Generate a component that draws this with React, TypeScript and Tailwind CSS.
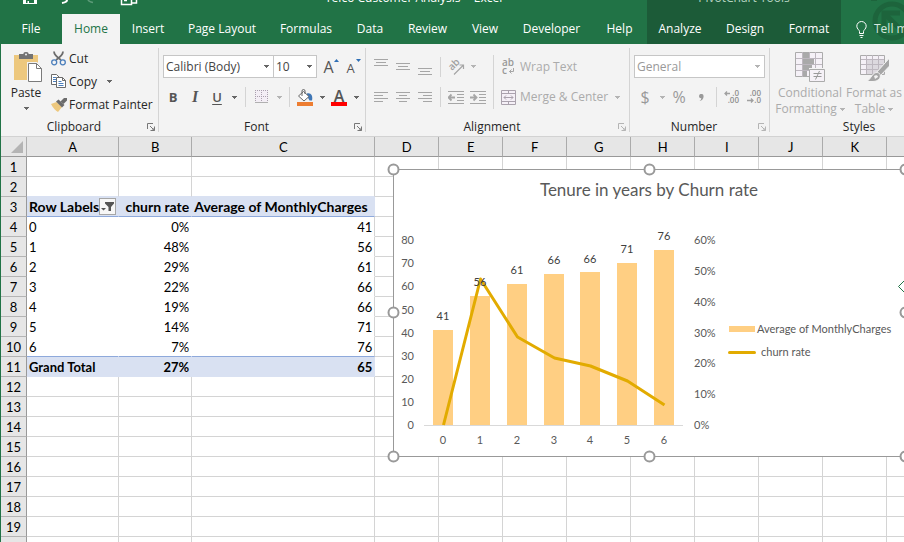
import React from "react";

const UI = "font-['Open_Sans','Noto_Sans',sans-serif]";
const SHEET = "font-['Lato','Open_Sans',sans-serif]";

/* ---------- small shared pieces ---------- */

function Caret({ className = "fill-[#666]" }: { className?: string }) {
  return (
    <svg width="5" height="3" viewBox="0 0 5 3" className={`shrink-0 ${className}`} aria-hidden="true" shapeRendering="crispEdges">
      <path d="M0 0h5v1H4v1H3v1H2V2H1V1H0z" />
    </svg>
  );
}

function Drop({ label, dim = false }: { label: string; dim?: boolean }) {
  return (
    <button type="button" aria-label={label} className="flex h-[22px] w-3 shrink-0 items-center justify-center">
      <Caret className={dim ? "fill-[#b4b4b4]" : "fill-[#666]"} />
    </button>
  );
}

function Tool({ label, children }: { label: string; children: React.ReactNode }) {
  return (
    <button type="button" aria-label={label} className="flex h-[22px] w-[22px] shrink-0 items-center justify-center">
      {children}
    </button>
  );
}

function Divider({ className = "mx-1 h-5" }: { className?: string }) {
  return <div className={`w-px shrink-0 bg-[#d4d4d4] ${className}`} />;
}

function Launcher({ dim }: { dim?: boolean }) {
  return (
    <svg width="8" height="8" viewBox="0 0 8 8" className={dim ? "stroke-[#b4b4b4]" : "stroke-[#777]"} fill="none" aria-hidden="true">
      <path d="M.5 6V.5H6M3 3l3.500 3.500M7.500 3.500v4h-4" />
      <path d="M5 7h2.500M7 5v2.500" />
    </svg>
  );
}

function Group({
  name,
  width,
  launcher,
  children,
}: {
  name: string;
  width: string;
  launcher?: "on" | "dim";
  children: React.ReactNode;
}) {
  return (
    <section aria-label={name} className={`relative flex shrink-0 flex-col ${width}`}>
      <div className="flex-1">{children}</div>
      <div className="flex h-[18px] items-center">
        <span className="flex-1 text-center leading-4 text-[#262626]">{name}</span>
        {launcher && (
          <button type="button" aria-label={`${name} settings`} className="mr-1 flex w-2 items-center">
            <Launcher dim={launcher === "dim"} />
          </button>
        )}
      </div>
      <div className="absolute right-0 top-1 h-[84px] w-px bg-[#d4d4d4]" />
    </section>
  );
}

function Combo({
  label,
  value,
  width,
  dim = false,
}: {
  label: string;
  value: string;
  width: string;
  dim?: boolean;
}) {
  return (
    <div className={`relative shrink-0 ${width}`}>
      <select
        aria-label={label}
        defaultValue={value}
        className={`h-[23px] w-full appearance-none border border-[#c6c6c6] bg-white pl-[2px] text-xs leading-4 outline-none ${
          dim ? "text-[#999]" : "text-[#444]"
        }`}
      >
        <option>{value}</option>
      </select>
      <span className="pointer-events-none absolute right-[5px] top-[10px]">
        <Caret className={dim ? "fill-[#b4b4b4]" : "fill-[#666]"} />
      </span>
    </div>
  );
}

/* ---------- title and tabs ---------- */

const TABS = [
  { name: "File", width: "w-[62px]" },
  { name: "Home", width: "w-[58px]" },
  { name: "Insert", width: "w-[56px]" },
  { name: "Page Layout", width: "w-[92px]" },
  { name: "Formulas", width: "w-[76px]" },
  { name: "Data", width: "w-[52px]" },
  { name: "Review", width: "w-[63px]" },
  { name: "View", width: "w-[52px]" },
  { name: "Developer", width: "w-[81px]" },
  { name: "Help", width: "w-[55px]" },
];

const CHART_TABS = [
  { name: "Analyze", width: "w-[66px]" },
  { name: "Design", width: "w-[64px]" },
  { name: "Format", width: "w-[64px]" },
];

function Tab({ name, width, active = false }: { name: string; width: string; active?: boolean }) {
  return (
    <button
      type="button"
      className={`h-[30px] shrink-0 whitespace-nowrap text-center text-xs leading-4 ${width} ${
        active ? "bg-[#f3f3f3] text-[#217346]" : "text-white"
      }`}
    >
      {name}
    </button>
  );
}

function Header() {
  return (
    <header className="flex h-11 shrink-0 overflow-hidden bg-[#217346]">
      <div className="flex shrink-0 flex-col">
        <div className="flex h-3.5 items-start overflow-hidden text-white">
          <svg width="150" height="8" viewBox="0 0 150 8" className="shrink-0" aria-hidden="true">
            <path d="M23 0h14v4H23z" fill="#fff" />
            <path d="M26 0h8v3h-5v-2h-1.500v2H26z" fill="#217346" />
            <path d="M67 0c0 1.500-2 2.500-5 3" stroke="#fff" strokeWidth="2" fill="none" />
            <path d="M88 0c.5 1 2 2 5 2.500" stroke="#5d9a78" strokeWidth="1.500" fill="none" />
            <path d="M121.500 0v4.500h10V0M136.500 0v3h-3M124 .5h3M131 3h4" stroke="#fff" strokeWidth="1.500" fill="none" />
          </svg>
          <h1 className="-mt-[10px] ml-[175px] whitespace-pre text-xs leading-4">Telco Customer Analysis -  Excel</h1>
        </div>
        <nav aria-label="Ribbon tabs" className="flex">
          {TABS.map((t) => (
            <Tab key={t.name} {...t} active={t.name === "Home"} />
          ))}
        </nav>
      </div>
      <div className="flex shrink-0 flex-col bg-[#1c5b38]">
        <div className="flex h-3.5 justify-center overflow-hidden">
          <span className="-mt-[10px] text-xs leading-4 text-[#b5d3c1]">PivotChart Tools</span>
        </div>
        <nav aria-label="PivotChart tabs" className="flex">
          {CHART_TABS.map((t) => (
            <Tab key={t.name} {...t} />
          ))}
        </nav>
      </div>
      <div className="relative flex min-w-0 flex-1 items-end overflow-hidden">
        <svg width="63" height="44" viewBox="0 0 63 44" className="absolute left-0 top-0" fill="none" aria-hidden="true">
          <circle cx="51" cy="21" r="17" stroke="#1d643c" strokeWidth="5" />
          <path d="M43 27V13h16M45 15l16 16" stroke="#1d643c" strokeWidth="5" />
          <path d="M30 0h6" stroke="#1d643c" strokeWidth="2" />
        </svg>
        <button type="button" className="relative flex h-[30px] items-center gap-[7px] whitespace-nowrap pl-[15px] text-xs leading-4 text-[#d5e6dc]">
          <svg width="11" height="17" viewBox="0 0 11 17" fill="none" stroke="#fff" aria-hidden="true">
            <path d="M3.500 12.500v-2C3.500 9 .8 8 .8 5.200a4.700 4.700 0 0 1 9.400 0C10.200 8 7.500 9 7.500 10.500v2zM3.500 14.500h4M4.500 16.500h2" />
          </svg>
          Tell me
        </button>
      </div>
    </header>
  );
}

/* ---------- ribbon icons ---------- */

function PasteIcon() {
  return (
    <svg width="28" height="30" viewBox="0 0 28 30" aria-hidden="true">
      <path d="M0 3h24v25H0z" fill="#edc87e" />
      <path d="M5 2h4.500V1Q10 0 12 0t2.500 1v1H19v5H5z" fill="#737373" />
      <circle cx="12" cy="2.500" r="1" fill="#f3f3f3" />
      <path d="M13 10h10l5 5v15H13z" fill="#f3f3f3" />
      <path d="M14.500 11.500h8l5 5v13h-13z" fill="#fff" stroke="#7a7a7a" />
      <path d="M22.500 11.500v5h5" fill="none" stroke="#7a7a7a" />
    </svg>
  );
}

function CutIcon() {
  return (
    <svg width="15" height="15" viewBox="0 0 15 15" fill="none" aria-hidden="true">
      <path d="M3 .5c0 3 2 5 7 8.500M12 .5c0 3-2 5-7 8.500" stroke="#6b6b6b" strokeWidth="1.800" />
      <circle cx="3.200" cy="11.300" r="2.500" stroke="#4a7ebb" strokeWidth="1.300" />
      <circle cx="11.800" cy="11.300" r="2.500" stroke="#4a7ebb" strokeWidth="1.300" />
    </svg>
  );
}

function CopyIcon() {
  return (
    <svg width="15" height="15" viewBox="0 0 15 15" fill="#fff" aria-hidden="true">
      <path d="M.5.500h5l3 3v7h-8z" stroke="#6b6b6b" />
      <path d="M2 3.500h3M2 5.500h4M2 7.500h4" stroke="#4a7ebb" />
      <path d="M5.500 3.500h6l3 3v7h-9z" stroke="#6b6b6b" />
      <path d="M11.500 3.500v3h3" fill="none" stroke="#6b6b6b" />
      <path d="M7.500 7.500h3M7.500 9.500h5M7.500 11.500h5" stroke="#4a7ebb" />
    </svg>
  );
}

function PainterIcon() {
  return (
    <svg width="16" height="14" viewBox="0 0 16 14" aria-hidden="true">
      <path d="M0 6 5.500 4l5.500 5-4 5C4.500 12.500 2 10 0 6z" fill="#edc87e" />
      <path d="M5 3.500 7.500 1.500l6 5.500-2.500 2.500z" fill="#6b6b6b" />
      <path d="m9.500 3.500 3.500-3.500h3v2.500L12.500 6z" fill="#6b6b6b" />
    </svg>
  );
}

function SizeIcon({ grow }: { grow: boolean }) {
  return (
    <span className="relative flex h-[22px] w-[22px] items-center justify-center text-[#555]">
      <span className={grow ? "pr-[5px] pt-px text-base leading-4" : "pr-[5px] pt-[3px] text-[13px] leading-4"}>A</span>
      <svg width="5" height="3" viewBox="0 0 5 3" className="absolute right-[3px] top-[3px]" fill="#2f6fb5" aria-hidden="true">
        <path d={grow ? "M2.500 0 5 3H0z" : "M0 0h5L2.500 3z"} />
      </svg>
    </span>
  );
}

function BordersIcon() {
  return (
    <svg width="14" height="14" viewBox="0 0 14 14" aria-hidden="true">
      <path d="M0 0h13v13H0z" fill="#f3eef5" />
      <path d="M0 .5h13M0 6.500h13M.5 0v13M6.500 0v13M12.500 0v13" stroke="#a9a0ad" strokeDasharray="1 1" />
      <path d="M0 12.500h13" stroke="#b0b0b0" />
    </svg>
  );
}

function FillIcon() {
  return (
    <svg width="16" height="17" viewBox="0 0 16 17" aria-hidden="true">
      <path d="M10 4.500c4-1 6 2 5 7h-2.500L10 7z" fill="#3f76b5" />
      <path d="m6.500 2.500 5.500 5-5 4.500-5.500-5z" fill="#fff" stroke="#666" />
      <path d="M5 7V2Q5 .5 6.500.500T8 2v3" fill="none" stroke="#666" />
      <path d="M0 13h16v4H0z" fill="#ed7d31" />
    </svg>
  );
}

function Lines({ rows, top = 0, align = "left" }: { rows: number[]; top?: number; align?: "left" | "center" | "right" }) {
  return (
    <svg width="14" height="16" viewBox="0 0 14 16" stroke="#a6a6a6" aria-hidden="true">
      {rows.map((w, i) => {
        const x = align === "left" ? 0 : align === "right" ? 14 - w : (14 - w) / 2;
        const y = top + i * 3 + 0.5;
        return <path key={i} d={`M${x} ${y}h${w}`} />;
      })}
    </svg>
  );
}

function OrientationIcon() {
  return (
    <svg width="16" height="16" viewBox="0 0 16 16" className="overflow-visible" aria-hidden="true">
      <text transform="translate(4 12) rotate(-45)" fontSize="10" fontWeight="600" fill="#a0a0a0">
        ab
      </text>
      <path d="M6 15.500 15 6.500M11.500 6h4v4" fill="none" stroke="#a6a6a6" strokeWidth="1.200" />
    </svg>
  );
}

function IndentIcon({ right }: { right: boolean }) {
  return (
    <svg width="16" height="13" viewBox="0 0 16 13" fill="none" stroke="#a6a6a6" aria-hidden="true">
      <path d="M0 .5h16M9 3.500h7M9 6.500h7M9 9.500h7M0 12.500h16" />
      <path d={right ? "M0 6.500h6M3.500 3.500l3 3-3 3" : "M1 6.500h6M3.500 3.500l-3 3 3 3"} strokeWidth="1.800" />
    </svg>
  );
}

function WrapIcon() {
  return (
    <svg width="15" height="18" viewBox="0 0 15 18" aria-hidden="true">
      <text x="1" y="8" fontSize="10" fontWeight="600" fill="#999">
        ab
      </text>
      <text x="1" y="16" fontSize="10" fontWeight="600" fill="#999">
        c
      </text>
      <path d="M12.500 10v3.500H8.500M10.500 11.500l-2 2 2 2" fill="none" stroke="#a6a6a6" />
    </svg>
  );
}

function MergeIcon() {
  return (
    <svg width="15" height="15" viewBox="0 0 15 15" fill="#f5f0f7" stroke="#aaa2ad" aria-hidden="true">
      <path d="M.5.500h14v14H.5z" />
      <path d="M.5 3.500h14M.5 11.500h14M7.500.500v3M7.500 11.500v3M3 7.500h9M5 5.500l-2 2 2 2M10 5.500l2 2-2 2" fill="none" />
    </svg>
  );
}

function DecimalIcon({ increase }: { increase: boolean }) {
  return (
    <svg width="16" height="16" viewBox="0 0 16 16" fill="#8f8f8f" fontSize="8" fontWeight="600" aria-hidden="true">
      <text x="15" y="7" textAnchor="end">
        {increase ? ".0" : ".00"}
      </text>
      <text x="15" y="14" textAnchor="end">
        {increase ? ".00" : ".0"}
      </text>
      <path
        d={increase ? "M1 4.500h5M3 2.500l-2 2 2 2" : "M1 11.500h6M5 9.500l2 2-2 2"}
        fill="none"
        stroke="#a0a0a0"
        strokeWidth="1.300"
      />
    </svg>
  );
}

function ConditionalIcon() {
  return (
    <svg width="30" height="30" viewBox="0 0 30 30" aria-hidden="true">
      <path d="M.5.500h27v24H.5z" fill="#f5f1f7" stroke="#ababab" />
      <path d="M7.500 0v25M14.500 0v25M20.500 0v25M1 6.500h26M1 12.500h26M1 18.500h26" stroke="#bdb7bf" fill="none" />
      <path d="M8 0h6v6H8zM8 7h11v5H8zM8 13h9v5H8zM8 19h4v5H8z" fill="#a9a9a9" />
      <path d="M14 16h16v14H14z" fill="#f3f3f3" />
      <path d="M14.500 17.500h15v12h-15z" fill="#f5f1f7" stroke="#ababab" />
      <path d="M18.500 21.500h8M18.500 24.500h8M24.500 19l-4 8.500" stroke="#999" fill="none" />
    </svg>
  );
}

function FormatTableIcon() {
  return (
    <svg width="30" height="30" viewBox="0 0 30 30" aria-hidden="true">
      <path d="M1.500 3.500h24v19h-24z" fill="#f5f1f7" stroke="#ababab" />
      <path d="M8 8h17v14H8z" fill="#dcd8de" />
      <path d="M7.500 3v19M13.500 3v19M19.500 3v19M2 7.500h23M2 12.500h23M2 17.500h23" stroke="#bdb7bf" fill="none" />
      <path d="M30.500 6v8L21 24l-4-3z" fill="#a6a6a6" stroke="#f3f3f3" />
      <path d="M20.500 21.500c2.500 3-.5 8-6.500 8H7c4-1.500 4-3.500 6.500-6.500s5-3 7-1.500z" fill="#a6a6a6" stroke="#f3f3f3" />
      <path d="M15 24c1.500-1.500 4-1 4 1l-3 2z" fill="#f3f3f3" />
    </svg>
  );
}

/* ---------- ribbon ---------- */

function Ribbon() {
  return (
    <div className="flex h-[93px] shrink-0 overflow-hidden border-b border-[#d2d2d2] bg-[#f3f3f3] text-xs text-[#262626]">
      <Group name="Clipboard" width="w-[158px]" launcher="on">
        <div className="flex pt-[3px]">
          <button type="button" className="flex w-[50px] flex-col items-center pt-[5px]">
            <span className="pl-1">
              <PasteIcon />
            </span>
            <span className="mt-[3px] leading-4">Paste</span>
            <span className="mt-[6px]">
              <Caret />
            </span>
          </button>
          <div className="flex flex-col">
            <button type="button" className="flex h-[23px] items-center gap-[3px] leading-4">
              <CutIcon />
              Cut
            </button>
            <div className="flex h-[23px] items-center gap-[6px]">
              <button type="button" className="flex items-center gap-[3px] leading-4">
                <CopyIcon />
                Copy
              </button>
              <Drop label="Copy options" />
            </div>
            <button type="button" className="flex h-[23px] items-center gap-[2px] whitespace-nowrap leading-4">
              <PainterIcon />
              Format Painter
            </button>
          </div>
        </div>
      </Group>

      <Group name="Font" width="w-[207px]" launcher="on">
        <div className="flex flex-col gap-2 pt-[11px]">
          <div className="flex items-center pl-1">
            <Combo label="Font" value="Calibri (Body)" width="w-[111px]" />
            <Combo label="Font size" value="10" width="-ml-px mr-[3px] w-[44px]" />
            <Tool label="Increase font size">
              <SizeIcon grow />
            </Tool>
            <Tool label="Decrease font size">
              <SizeIcon grow={false} />
            </Tool>
          </div>
          <div className="flex items-center pl-[3px] text-[#555]">
            <Tool label="Bold">
              <span className="text-[13px] font-bold leading-4">B</span>
            </Tool>
            <Tool label="Italic">
              <span className="font-['Liberation_Serif',serif] text-base font-bold italic leading-4">I</span>
            </Tool>
            <Tool label="Underline">
              <span className="text-[13px] font-semibold leading-4 underline underline-offset-2">U</span>
            </Tool>
            <Drop label="Underline style" />
            <Divider className="mx-[5px] h-5" />
            <Tool label="Borders">
              <BordersIcon />
            </Tool>
            <Drop label="Border style" dim />
            <Divider />
            <Tool label="Fill color">
              <FillIcon />
            </Tool>
            <Drop label="Fill colors" />
            <Tool label="Font color">
              <span className="flex w-4 flex-col items-center border-b-4 border-[#f00]">
                <span className="h-3.5 text-base font-semibold leading-4">A</span>
              </span>
            </Tool>
            <Drop label="Font colors" />
          </div>
        </div>
      </Group>

      <Group name="Alignment" width="w-[264px]" launcher="dim">
        <div className="flex pt-[11px] text-[#ababab]">
          <div className="flex flex-col gap-2 pl-1">
            <div className="flex h-[23px] items-center">
              <Tool label="Top align">
                <Lines rows={[14, 10, 14]} align="center" />
              </Tool>
              <Tool label="Middle align">
                <Lines rows={[14, 10, 14]} top={4} align="center" />
              </Tool>
              <Tool label="Bottom align">
                <Lines rows={[14, 10, 14]} top={9} align="center" />
              </Tool>
              <Divider />
              <Tool label="Orientation">
                <OrientationIcon />
              </Tool>
              <Drop label="Orientation options" dim />
            </div>
            <div className="flex items-center">
              <Tool label="Align left">
                <Lines rows={[14, 9, 14, 9]} top={3} />
              </Tool>
              <Tool label="Center">
                <Lines rows={[14, 8, 14, 8]} top={3} align="center" />
              </Tool>
              <Tool label="Align right">
                <Lines rows={[14, 9, 14, 9]} top={3} align="right" />
              </Tool>
              <Divider />
              <Tool label="Decrease indent">
                <IndentIcon right={false} />
              </Tool>
              <Tool label="Increase indent">
                <IndentIcon right />
              </Tool>
            </div>
          </div>
          <Divider className="ml-1 mr-[7px] h-[54px]" />
          <div className="flex flex-col gap-2">
            <button type="button" className="flex h-[23px] items-center gap-1 whitespace-nowrap leading-4">
              <WrapIcon />
              Wrap Text
            </button>
            <div className="flex items-center">
              <button type="button" className="flex h-[22px] w-[110px] items-center gap-1 whitespace-nowrap leading-4">
                <MergeIcon />
                Merge &amp; Center
              </button>
              <Drop label="Merge options" dim />
            </div>
          </div>
        </div>
      </Group>

      <Group name="Number" width="w-[140px]" launcher="dim">
        <div className="flex flex-col gap-2 pl-1 pt-[11px]">
          <Combo label="Number format" value="General" width="w-[131px]" dim />
          <div className="flex items-center text-[#999]">
            <Tool label="Accounting format">
              <span className="text-base leading-4">$</span>
            </Tool>
            <Drop label="Currencies" dim />
            <Tool label="Percent style">
              <span className="text-base leading-4">%</span>
            </Tool>
            <Tool label="Comma style">
              <svg width="5" height="7" viewBox="0 0 5 7" fill="#999" aria-hidden="true">
                <path d="M0 2.200a2.200 2.200 0 0 1 4.600 0C4.600 5 3 6.500.5 7 2 6 2.300 5 2.200 4.300A2.100 2.100 0 0 1 0 2.200z" />
              </svg>
            </Tool>
            <Divider />
            <Tool label="Increase decimal">
              <DecimalIcon increase />
            </Tool>
            <Tool label="Decrease decimal">
              <DecimalIcon increase={false} />
            </Tool>
          </div>
        </div>
      </Group>

      <Group name="Styles" width="w-[178px]">
        <div className="flex pl-1 pt-2 text-[#ababab]">
          <button type="button" className="flex w-[72px] flex-col items-center whitespace-nowrap leading-4">
            <ConditionalIcon />
            <span className="mt-[3px]">Conditional</span>
            <span className="flex items-center gap-[3px]">
              Formatting <Caret className="fill-[#b4b4b4]" />
            </span>
          </button>
          <button type="button" className="flex w-14 flex-col items-center whitespace-nowrap leading-4">
            <FormatTableIcon />
            <span className="mt-[3px]">Format as</span>
            <span className="flex items-center gap-[3px]">
              Table <Caret className="fill-[#b4b4b4]" />
            </span>
          </button>
        </div>
      </Group>
    </div>
  );
}

/* ---------- worksheet ---------- */

const COLUMNS = ["A", "B", "C", "D", "E", "F", "G", "H", "I", "J", "K", "L"];
const ROWS = Array.from({ length: 20 }, (_, i) => i + 1);

const PIVOT: Record<number, [string, string, string]> = {
  3: ["Row Labels", "churn rate", "Average of MonthlyCharges"],
  4: ["0", "0%", "41"],
  5: ["1", "48%", "56"],
  6: ["2", "29%", "61"],
  7: ["3", "22%", "66"],
  8: ["4", "19%", "66"],
  9: ["5", "14%", "71"],
  10: ["6", "7%", "76"],
  11: ["Grand Total", "27%", "65"],
};

function cellBorders(row: number, col: number) {
  if (col > 2) return "border-[#d4d4d4]";
  if (row === 2) return "border-r-[#d4d4d4] border-b-[#d9e1f2]";
  if (row === 3) return "border-r-[#d9e1f2] border-b-[#8ea9db] bg-[#d9e1f2]";
  if (row === 11) return "border-[#d9e1f2] bg-[#d9e1f2]";
  if (row > 3 && row < 11) {
    const bottom = row === 10 ? "border-b-[#8ea9db]" : "border-b-white";
    return `${bottom} ${col === 2 ? "border-r-[#d4d4d4]" : "border-r-white"}`;
  }
  return "border-[#d4d4d4]";
}

function FilterButton() {
  return (
    <button
      type="button"
      aria-label="Filter row labels"
      className="flex h-[17px] w-[17px] shrink-0 items-center justify-center border border-[#a6a6a6] bg-[#f7f7f7]"
    >
      <svg width="13" height="10" viewBox="0 0 13 10" fill="#555" aria-hidden="true">
        <path d="M4 0h9v1.500L10 5v4H7.500V5L4 1.500zM0 6h5L2.500 8.500z" />
      </svg>
    </button>
  );
}

function Cell({ row, col }: { row: number; col: number }) {
  const value = col < 3 ? PIVOT[row]?.[col] : undefined;
  const header = row === 3;
  const text = header ? "text-[14px] font-bold" : row === 11 ? "font-bold" : "";
  const align = col === 0 || (header && col === 2) ? "text-left" : "text-right";
  return (
    <td className={`h-5 overflow-hidden whitespace-nowrap border-b border-r p-0 px-[2px] leading-[18px] ${cellBorders(row, col)} ${text} ${align}`}>
      {header && col === 0 ? (
        <span className="flex items-center justify-between">
          {value}
          <FilterButton />
        </span>
      ) : (
        value
      )}
    </td>
  );
}

function Grid() {
  return (
    <table className="w-max table-fixed border-separate border-spacing-0 text-[13px] text-black">
      <colgroup>
        <col className="w-[26px]" />
        <col className="w-[92px]" />
        <col className="w-[73px]" />
        <col className="w-[183px]" />
        {COLUMNS.slice(3).map((c) => (
          <col key={c} className="w-[64px]" />
        ))}
      </colgroup>
      <thead>
        <tr>
          <th className="h-5 border-b border-r border-b-[#999] border-r-[#b0b0b0] bg-[#e6e6e6] p-0">
            <svg width="12" height="12" viewBox="0 0 12 12" className="ml-[10px]" aria-hidden="true">
              <path d="M12 0v12H0z" fill="#b4b4b4" />
            </svg>
          </th>
          {COLUMNS.map((c) => (
            <th key={c} scope="col" className="h-5 border-b border-r border-b-[#999] border-r-[#ababab] bg-[#e6e6e6] p-0 font-normal leading-[18px]">
              {c}
            </th>
          ))}
        </tr>
      </thead>
      <tbody>
        {ROWS.map((r) => (
          <tr key={r}>
            <th scope="row" className="h-5 border-b border-r border-b-[#b4b4b4] border-r-[#999] bg-[#e6e6e6] p-0 font-normal leading-[18px]">
              {r}
            </th>
            {COLUMNS.map((c, i) => (
              <Cell key={c} row={r} col={i} />
            ))}
          </tr>
        ))}
      </tbody>
    </table>
  );
}

/* ---------- pivot chart ---------- */

const POINTS = [
  { year: 0, x: 50, charge: 41, top: 161, rate: 256, label: 151 },
  { year: 1, x: 87, charge: 56, top: 127, rate: 110, label: 117 },
  { year: 2, x: 124, charge: 61, top: 115, rate: 168, label: 105 },
  { year: 3, x: 161, charge: 66, top: 105, rate: 189, label: 95 },
  { year: 4, x: 197, charge: 66, top: 103, rate: 197, label: 94 },
  { year: 5, x: 234, charge: 71, top: 94, rate: 212, label: 84 },
  { year: 6, x: 271, charge: 76, top: 81, rate: 236, label: 71 },
];

const HANDLES = [
  [0, 0],
  [256, 0],
  [512, 0],
  [0, 143],
  [512, 143],
  [0, 287],
  [256, 287],
  [512, 287],
];

function Chart() {
  return (
    <svg
      width="513"
      height="288"
      viewBox="0 0 513 288"
      role="img"
      aria-label="Tenure in years by Churn rate"
      className="absolute left-[392px] top-8 overflow-visible text-[11px]"
      fill="#595959"
    >
      <path d="M.5.500h512v287H.5z" fill="#fff" stroke="#999" />
      <text x="256" y="27" textAnchor="middle" fontSize="17">
        Tenure in years by Churn rate
      </text>

      {POINTS.map((p) => (
        <rect key={p.year} x={p.x - 10} y={p.top} width="20" height={256 - p.top} fill="#ffcf83" />
      ))}
      <path d="M31 256.500h259" stroke="#d9d9d9" />
      <polyline
        points={POINTS.map((p) => `${p.x + 0.5},${p.rate}`).join(" ")}
        fill="none"
        stroke="#e2ab00"
        strokeWidth="3"
        strokeLinejoin="round"
      />

      {POINTS.map((p) => (
        <g key={p.year} textAnchor="middle">
          <text x={p.x} y={p.label} fill="#404040">
            {p.charge}
          </text>
          <text x={p.x} y="275">
            {p.year}
          </text>
        </g>
      ))}
      {[0, 10, 20, 30, 40, 50, 60, 70, 80].map((v) => (
        <text key={v} x="21" y={260 - v * 2.31} textAnchor="end">
          {v}
        </text>
      ))}
      {[0, 10, 20, 30, 40, 50, 60].map((v) => (
        <text key={v} x="301" y={260 - v * 3.08}>
          {v}%
        </text>
      ))}

      <path d="M336 157h26v6h-26z" fill="#ffcf83" />
      <text x="364" y="164">
        Average of MonthlyCharges
      </text>
      <path d="M336.500 183.500h25" stroke="#e2ab00" strokeWidth="3" strokeLinecap="round" />
      <text x="368" y="187">
        churn rate
      </text>

      <path d="m505.500 117.500 6-6 6 6-6 6z" fill="#fff" stroke="#217346" />
      {HANDLES.map(([x, y]) => (
        <circle key={`${x}-${y}`} cx={x + 0.5} cy={y + 0.5} r="5" fill="#fff" stroke="#999" strokeWidth="2" />
      ))}
    </svg>
  );
}

export default function App() {
  return (
    <div className={`flex h-screen flex-col overflow-hidden bg-white ${UI}`}>
      <Header />
      <div className="flex min-h-0 flex-1 flex-col border-l border-[#217346]">
        <Ribbon />
        <main className={`relative min-h-0 flex-1 overflow-hidden ${SHEET}`}>
          <Grid />
          <Chart />
        </main>
      </div>
    </div>
  );
}
